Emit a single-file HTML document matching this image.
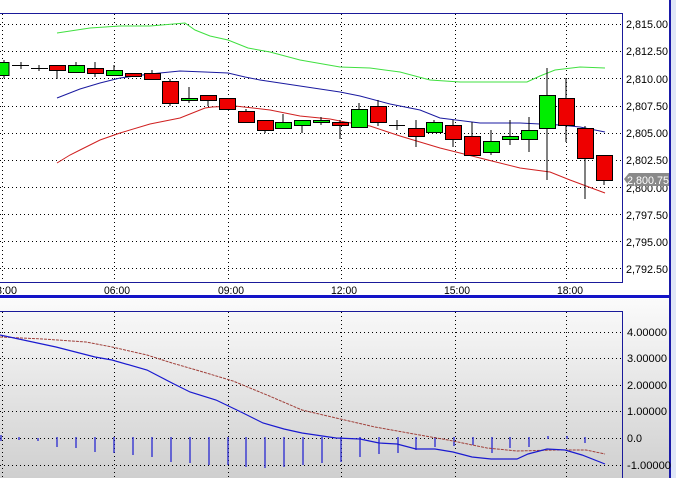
<!DOCTYPE html>
<html><head><meta charset="utf-8"><style>
html,body{margin:0;padding:0;background:#fff;width:676px;height:478px;overflow:hidden}
svg{display:block}
text{font-family:"Liberation Sans",sans-serif;font-size:11px;fill:#000}
</style></head><body>
<svg width="676" height="478" viewBox="0 0 676 478" xmlns="http://www.w3.org/2000/svg">
<defs>
<linearGradient id="g" x1="0" y1="0" x2="0" y2="1">
<stop offset="0" stop-color="#fbfbfb"/><stop offset="1" stop-color="#cfcfcf"/>
</linearGradient>
</defs>
<rect x="0" y="0" width="676" height="478" fill="#fff"/>
<rect x="0" y="299" width="670" height="179" fill="url(#g)"/>
<!-- top grid -->
<g stroke="#000" stroke-width="1" stroke-dasharray="1,3" shape-rendering="crispEdges">
<line x1="0" y1="24.5" x2="622" y2="24.5"/><line x1="0" y1="51.5" x2="622" y2="51.5"/>
<line x1="0" y1="78.5" x2="622" y2="78.5"/><line x1="0" y1="106.5" x2="622" y2="106.5"/>
<line x1="0" y1="133.5" x2="622" y2="133.5"/><line x1="0" y1="160.5" x2="622" y2="160.5"/>
<line x1="0" y1="187.5" x2="622" y2="187.5"/><line x1="0" y1="214.5" x2="622" y2="214.5"/>
<line x1="0" y1="241.5" x2="622" y2="241.5"/><line x1="0" y1="268.5" x2="622" y2="268.5"/>
<line x1="2.5" y1="14" x2="2.5" y2="282"/><line x1="114.5" y1="14" x2="114.5" y2="282"/>
<line x1="228.5" y1="14" x2="228.5" y2="282"/><line x1="341.5" y1="14" x2="341.5" y2="282"/>
<line x1="455.5" y1="14" x2="455.5" y2="282"/><line x1="566.5" y1="14" x2="566.5" y2="282"/>
<!-- bottom grid -->
<line x1="0" y1="332.5" x2="622" y2="332.5"/><line x1="0" y1="358.5" x2="622" y2="358.5"/>
<line x1="0" y1="385.5" x2="622" y2="385.5"/><line x1="0" y1="411.5" x2="622" y2="411.5"/>
<line x1="0" y1="438.5" x2="622" y2="438.5"/><line x1="0" y1="465.5" x2="622" y2="465.5"/>
<line x1="2.5" y1="312" x2="2.5" y2="478"/><line x1="114.5" y1="312" x2="114.5" y2="478"/>
<line x1="228.5" y1="312" x2="228.5" y2="478"/><line x1="341.5" y1="312" x2="341.5" y2="478"/>
<line x1="455.5" y1="312" x2="455.5" y2="478"/><line x1="566.5" y1="312" x2="566.5" y2="478"/>
</g>
<!-- borders -->
<g stroke="#1a1a9a" fill="none" shape-rendering="crispEdges">
<line x1="0" y1="13.5" x2="623" y2="13.5"/><line x1="622.5" y1="13" x2="622.5" y2="283"/>
<line x1="0" y1="282.5" x2="623" y2="282.5"/>
<line x1="0" y1="311.5" x2="623" y2="311.5"/><line x1="622.5" y1="311" x2="622.5" y2="478"/>
</g>
<rect x="0" y="295" width="670" height="3" fill="#1414c8"/>
<rect x="669" y="0" width="2" height="478" fill="#1a1aa8"/>
<rect x="671" y="0" width="5" height="478" fill="#dfe6f7"/>
<!-- bands -->
<polyline fill="none" stroke="#40e040" stroke-width="1" points="57,33 90,28 120,26 150,26 185,23 195,30 210,36 228,40 248,48 270,52 300,60 340,67 370,68 400,72 430,80 460,82 488,82 527,82 540,76 555,70 580,67 605,68"/>
<polyline fill="none" stroke="#1a1aa0" stroke-width="1" points="57,98 80,89 100,83 120,78 150,74 180,71 205,72 228,73 245,77 260,80 300,86 340,92 360,96 390,104 420,110 440,118 480,123 520,123 560,125 580,127 605,132"/>
<polyline fill="none" stroke="#d02020" stroke-width="1" points="57,163 70,155 80,150 100,140 120,133 150,124 180,118 190,114 205,108 212,107 235,106 270,110 300,116 330,119 345,122 370,126 400,136 440,148 480,158 520,168 550,172 570,180 605,193"/>
<!-- candles -->
<g stroke="#000" stroke-width="1">
<g fill="#00ee00">
<line x1="4" y1="60" x2="4" y2="78"/><rect x="-1" y="62.5" width="10" height="13"/>
<line x1="76" y1="62" x2="76" y2="73"/><rect x="68.5" y="65.5" width="16" height="7"/>
<line x1="114" y1="65" x2="114" y2="76"/><rect x="106.5" y="70.5" width="16" height="5"/>
<line x1="189" y1="87" x2="189" y2="103"/><rect x="181.5" y="98.5" width="16" height="2"/>
<line x1="283" y1="114" x2="283" y2="128"/><rect x="275.5" y="122.5" width="16" height="6"/>
<line x1="302" y1="120" x2="302" y2="133"/><rect x="294.5" y="120.5" width="16" height="5"/>
<line x1="321" y1="117" x2="321" y2="125"/><rect x="313.5" y="120.5" width="16" height="2"/>
<line x1="359" y1="103" x2="359" y2="128"/><rect x="351.5" y="109.5" width="16" height="18"/>
<line x1="434" y1="120" x2="434" y2="133"/><rect x="426.5" y="122.5" width="16" height="10"/>
<line x1="491" y1="130" x2="491" y2="155"/><rect x="483.5" y="141.5" width="16" height="11"/>
<line x1="510" y1="120" x2="510" y2="145"/><rect x="502.5" y="136.5" width="16" height="3"/>
<line x1="529" y1="117" x2="529" y2="152"/><rect x="521.5" y="130.5" width="16" height="9"/>
<line x1="547" y1="68" x2="547" y2="180"/><rect x="539.5" y="95.5" width="16" height="33"/>
</g>
<g fill="#ee0000">
<line x1="57" y1="65" x2="57" y2="79"/><rect x="49.5" y="65.5" width="16" height="5"/>
<line x1="95" y1="62" x2="95" y2="77"/><rect x="87.5" y="68.5" width="16" height="5"/>
<rect x="125.5" y="73.5" width="16" height="3"/>
<line x1="152" y1="70" x2="152" y2="79"/><rect x="144.5" y="73.5" width="16" height="6"/>
<line x1="170" y1="79" x2="170" y2="106"/><rect x="162.5" y="81.5" width="16" height="22"/>
<line x1="208" y1="95" x2="208" y2="106"/><rect x="200.5" y="95.5" width="16" height="5"/>
<rect x="219.5" y="98.5" width="16" height="11"/>
<line x1="246" y1="109" x2="246" y2="122"/><rect x="238.5" y="111.5" width="16" height="11"/>
<line x1="265" y1="120" x2="265" y2="133"/><rect x="257.5" y="120.5" width="16" height="10"/>
<line x1="340" y1="120" x2="340" y2="139"/><rect x="332.5" y="122.5" width="16" height="3"/>
<line x1="378" y1="100" x2="378" y2="126"/><rect x="370.5" y="106.5" width="16" height="16"/>
<line x1="416" y1="120" x2="416" y2="147"/><rect x="408.5" y="128.5" width="16" height="8"/>
<line x1="453" y1="120" x2="453" y2="147"/><rect x="445.5" y="125.5" width="16" height="14"/>
<line x1="472" y1="122" x2="472" y2="155"/><rect x="464.5" y="136.5" width="16" height="19"/>
<line x1="566" y1="78" x2="566" y2="142"/><rect x="558.5" y="98.5" width="16" height="27"/>
<line x1="585" y1="126" x2="585" y2="199"/><rect x="577.5" y="128.5" width="16" height="30"/>
<line x1="604" y1="155" x2="604" y2="185"/><rect x="596.5" y="155.5" width="16" height="25"/>
</g>
<line x1="12" y1="65.5" x2="29" y2="65.5"/><line x1="21" y1="62" x2="21" y2="69"/>
<line x1="31" y1="68.5" x2="48" y2="68.5"/><line x1="39" y1="65" x2="39" y2="71"/>
<line x1="389" y1="125.5" x2="405" y2="125.5"/><line x1="397" y1="120" x2="397" y2="130"/>
</g>
<!-- axis labels -->
<g>
<text x="626" y="28" textLength="42" lengthAdjust="spacingAndGlyphs">2,815.00</text>
<text x="626" y="55" textLength="42" lengthAdjust="spacingAndGlyphs">2,812.50</text>
<text x="626" y="83" textLength="42" lengthAdjust="spacingAndGlyphs">2,810.00</text>
<text x="626" y="110" textLength="42" lengthAdjust="spacingAndGlyphs">2,807.50</text>
<text x="626" y="137" textLength="42" lengthAdjust="spacingAndGlyphs">2,805.00</text>
<text x="626" y="164" textLength="42" lengthAdjust="spacingAndGlyphs">2,802.50</text>
<text x="626" y="192" textLength="42" lengthAdjust="spacingAndGlyphs">2,800.00</text>
<text x="626" y="219" textLength="42" lengthAdjust="spacingAndGlyphs">2,797.50</text>
<text x="626" y="246" textLength="42" lengthAdjust="spacingAndGlyphs">2,795.00</text>
<text x="626" y="273" textLength="42" lengthAdjust="spacingAndGlyphs">2,792.50</text>
</g>
<polygon points="624,179 629,173 669,173 669,186 629,186" fill="#8a8a8a"/>
<text x="627" y="184" textLength="42" lengthAdjust="spacingAndGlyphs" style="fill:#fff">2,800.75</text>
<g>
<text x="-4" y="294" textLength="21" lengthAdjust="spacingAndGlyphs">3:00</text>
<text x="104" y="294" textLength="26" lengthAdjust="spacingAndGlyphs">06:00</text>
<text x="218" y="294" textLength="26" lengthAdjust="spacingAndGlyphs">09:00</text>
<text x="331" y="294" textLength="26" lengthAdjust="spacingAndGlyphs">12:00</text>
<text x="444" y="294" textLength="26" lengthAdjust="spacingAndGlyphs">15:00</text>
<text x="557" y="294" textLength="26" lengthAdjust="spacingAndGlyphs">18:00</text>
<text x="627" y="336" textLength="40" lengthAdjust="spacingAndGlyphs">4.00000</text>
<text x="627" y="362" textLength="40" lengthAdjust="spacingAndGlyphs">3.00000</text>
<text x="627" y="389" textLength="40" lengthAdjust="spacingAndGlyphs">2.00000</text>
<text x="627" y="415" textLength="40" lengthAdjust="spacingAndGlyphs">1.00000</text>
<text x="627" y="442" textLength="15" lengthAdjust="spacingAndGlyphs">0.0</text>
<text x="627" y="469" textLength="44" lengthAdjust="spacingAndGlyphs">-1.00000</text>
</g>
<!-- histogram -->
<g stroke="#1a1ad0" stroke-width="1.2">
<line x1="1" y1="435" x2="1" y2="441"/><line x1="19" y1="437" x2="19" y2="440"/>
<line x1="38" y1="438" x2="38" y2="441"/><line x1="57" y1="437" x2="57" y2="447"/>
<line x1="76" y1="437" x2="76" y2="448"/><line x1="95" y1="437" x2="95" y2="452"/>
<line x1="114" y1="437" x2="114" y2="453"/><line x1="133" y1="437" x2="133" y2="455"/>
<line x1="152" y1="437" x2="152" y2="457"/><line x1="171" y1="437" x2="171" y2="462"/>
<line x1="190" y1="437" x2="190" y2="463"/><line x1="209" y1="437" x2="209" y2="465"/>
<line x1="228" y1="437" x2="228" y2="465"/><line x1="246" y1="437" x2="246" y2="467"/>
<line x1="265" y1="437" x2="265" y2="468"/><line x1="284" y1="437" x2="284" y2="467"/>
<line x1="303" y1="437" x2="303" y2="465"/><line x1="322" y1="437" x2="322" y2="463"/>
<line x1="341" y1="437" x2="341" y2="462"/><line x1="360" y1="437" x2="360" y2="457"/>
<line x1="379" y1="437" x2="379" y2="454"/><line x1="398" y1="437" x2="398" y2="453"/>
<line x1="416" y1="437" x2="416" y2="450"/><line x1="435" y1="437" x2="435" y2="447"/>
<line x1="454" y1="437" x2="454" y2="446"/><line x1="473" y1="437" x2="473" y2="445"/>
<line x1="492" y1="437" x2="492" y2="453"/><line x1="510" y1="437" x2="510" y2="448"/>
<line x1="529" y1="437" x2="529" y2="447"/><line x1="548" y1="436" x2="548" y2="439"/>
<line x1="567" y1="436" x2="567" y2="439"/><line x1="585" y1="437" x2="585" y2="443"/>
</g>
<polyline fill="none" stroke="#a0403a" stroke-width="1" stroke-dasharray="3,1" points="0,337 43,339 86,342 112,347 147,355 172,363 203,372 233,381 267,395 302,410 336,418 375,427 414,434 448,440 487,448 517,451 556,450 586,450 605,454"/>
<polyline fill="none" stroke="#1a1ad0" stroke-width="1.2" points="0,335 56,347 95,357 112,360 147,370 172,383 190,392 216,400 241,412 263,423 284,429 302,433 336,438 360,439 379,443 397,444 416,449 435,449 453,452 472,457 491,459 517,459 528,454 547,449 565,450 582,455 605,464"/>
</svg>
</body></html>
